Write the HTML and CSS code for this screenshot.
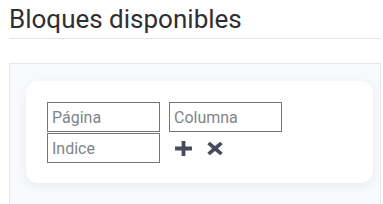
FILE: index.html
```html
<!DOCTYPE html>
<html lang="es">
<head>
  <meta charset="UTF-8" />
  <meta name="viewport" content="width=device-width, initial-scale=1.0"/>
  <title>Bloques disponibles</title>
  <link rel="stylesheet" href="styles.css">
</head>
<body>

  <h2 class="title">Bloques disponibles</h2>

  <div class="panel">
    <div class="card">
      <div class="fields">
        <input class="field" type="text" placeholder="Página">
        <input class="field" type="text" placeholder="Columna">
        <input class="field" type="text" placeholder="Indice">
        <div class="actions">
          <button class="icon-btn" title="Agregar">
            <svg width="19" height="17" viewBox="0 0 18 16"><path d="M7.2 1h3.6v5.2H17v3.6h-6.2V15H7.2V9.8H1V6.2h6.2z" fill="#454b58"/></svg>
          </button>
          <button class="icon-btn" title="Quitar">
            <svg width="16" height="15" viewBox="0 0 15 14"><path d="M2.6.6 7.5 4.7 12.4.6l2.3 2.4L10.3 7l4.4 4-2.3 2.4-4.9-4.1-4.9 4.1L.3 11l4.4-4L.3 3z" fill="#454b58"/></svg>
          </button>
        </div>
      </div>
    </div>
  </div>

</body>
</html>
```

FILE: styles.css
```css
body {
  font-family: Roboto, "Liberation Sans", sans-serif;
  margin: 0;
  padding: 0 2px 0 9px;
  background-color: #fff;
}

.title {
  font-size: 26px;
  line-height: 30px;
  font-weight: 400;
  color: #2f2f33;
  margin: 0;
  padding: 4px 0 4px;
  border-bottom: 1px solid #e4e5ea;
}

.panel {
  margin-top: 24px;
  background-color: #f8f9fc;
  border: 1px solid #e3e6f0;
  border-bottom: none;
  padding: 17px 7px 30px 16px;
}

.card {
  background-color: #fff;
  border-radius: 12px;
  box-shadow: 0 3px 10px rgba(40, 50, 90, 0.07);
  padding: 21px 21px 20px;
}

.fields {
  display: grid;
  grid-template-columns: repeat(2, 113px);
  column-gap: 9px;
  row-gap: 1px;
}

.field {
  box-sizing: border-box;
  width: 113px;
  height: 30px;
  border: 1px solid #767676;
  border-radius: 0;
  padding: 0 4px;
  font-family: Roboto, "Liberation Sans", sans-serif;
  font-size: 16px;
  color: #333;
}

.field::placeholder {
  color: #80848c;
}

.actions {
  display: flex;
  align-items: center;
  gap: 14px;
  padding-left: 5px;
}

.icon-btn {
  background: none;
  border: none;
  padding: 0;
  cursor: pointer;
  display: flex;
}
```
